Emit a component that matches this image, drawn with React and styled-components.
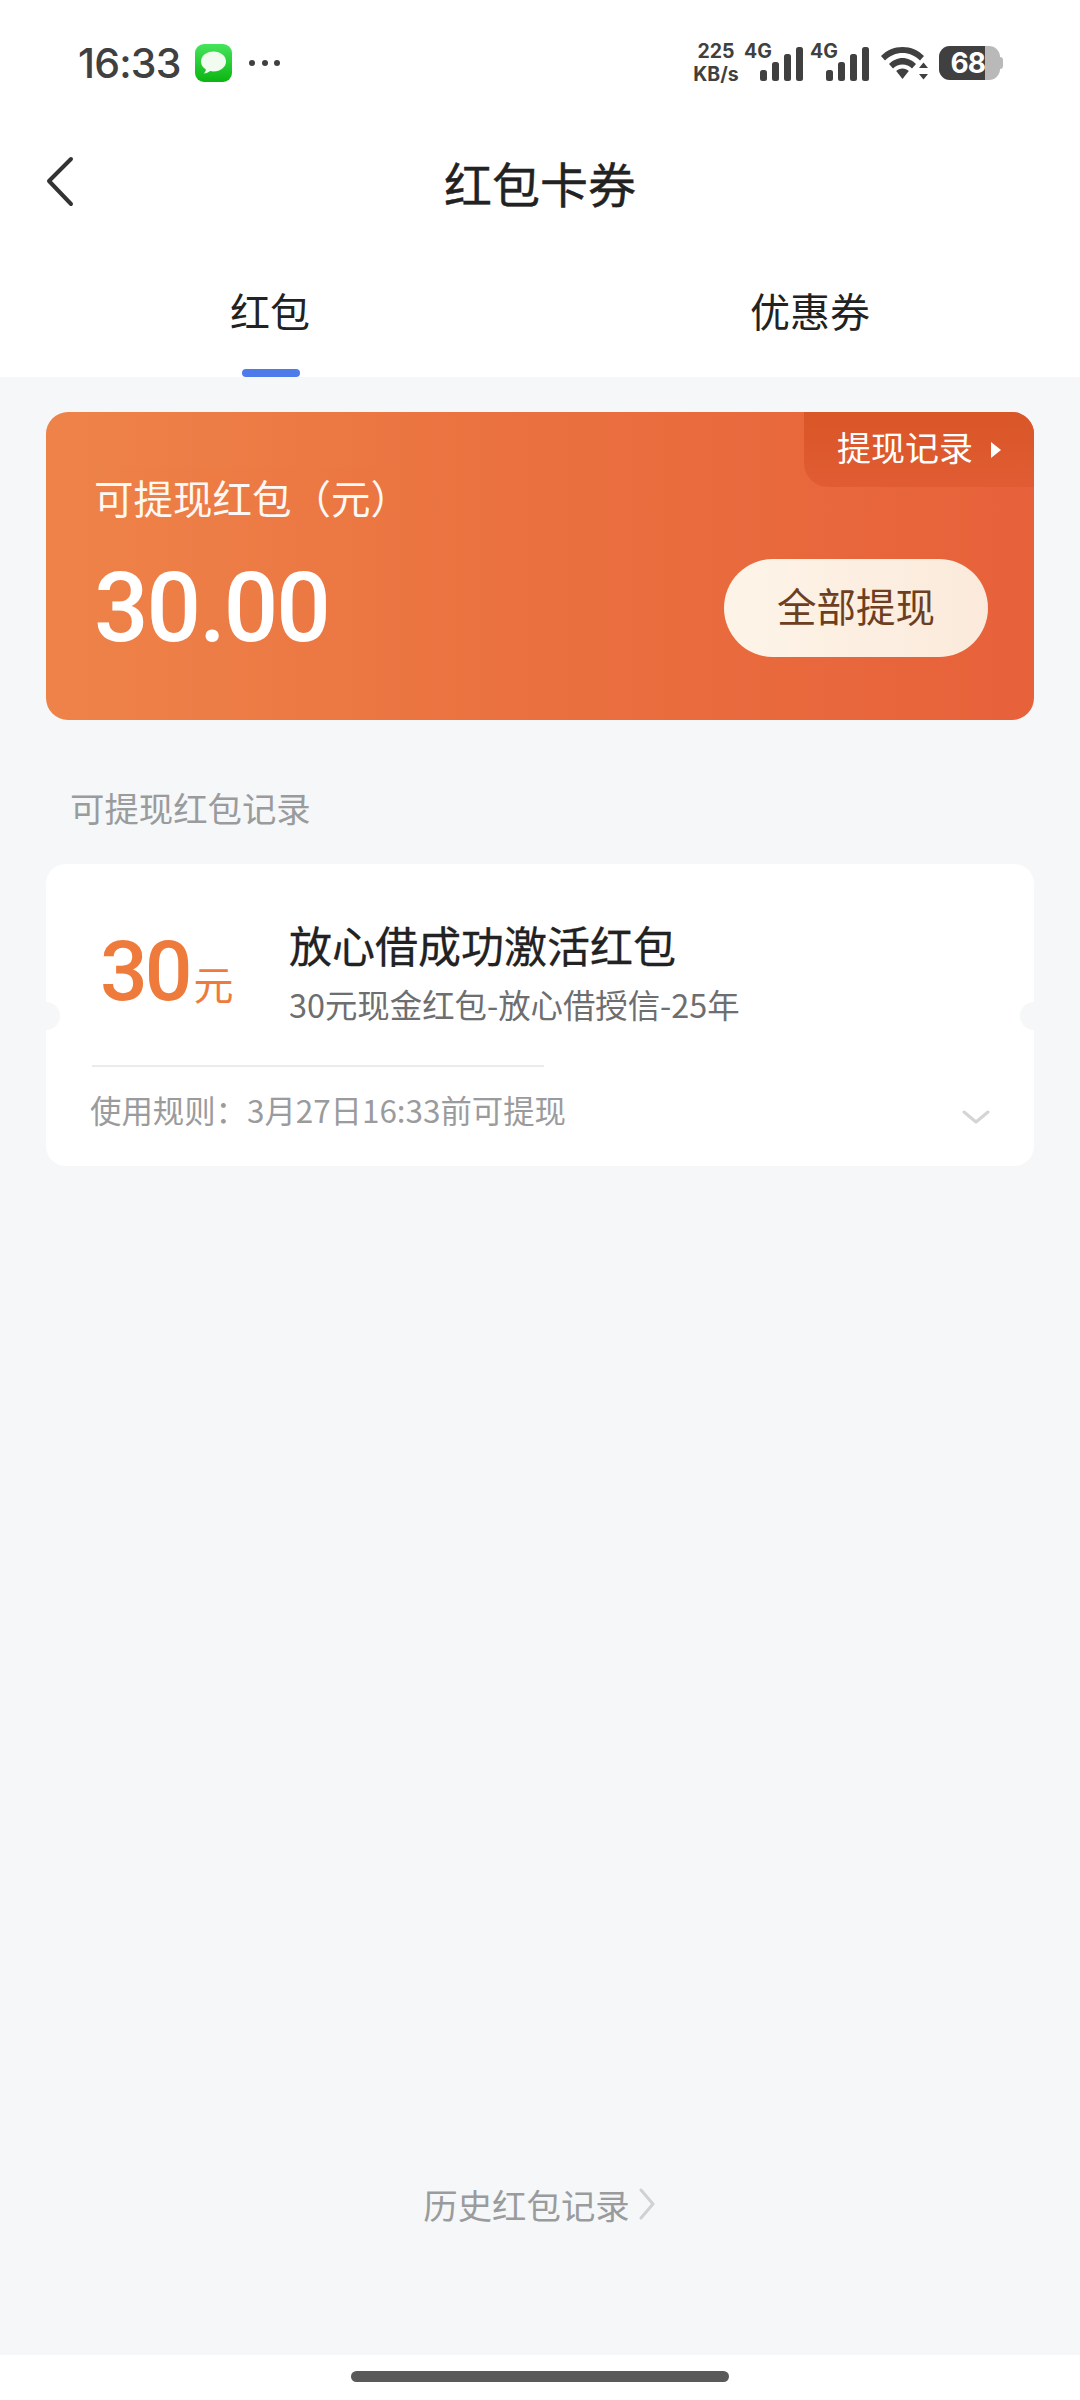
import React from "react";
import styled, { createGlobalStyle } from "styled-components";

const Global = createGlobalStyle`
  html, body { margin: 0; padding: 0; background: #fff; }
  * { box-sizing: border-box; }
  body { font-family: Roboto, "Noto Sans CJK SC", sans-serif; }
`;
const Page = styled.div`
  width: 1080px; height: 2400px; display: flex; flex-direction: column; background: #fff; overflow: hidden;
`;
const StatusBar = styled.div`
  height: 126px; display: flex; align-items: center; justify-content: space-between; padding: 0 80px 0 78px; color: #404040;
`;
const StatusLeft = styled.div`display: flex; align-items: center;`;
const Time = styled.span`
  font: 500 41px/48px Inter, Roboto, sans-serif; letter-spacing: -0.8px; width: 117px;
`;
const Dots = styled.div`
  display: flex; gap: 6.5px; margin-left: 17px;
  i { width: 6px; height: 6px; border-radius: 50%; background: #404040; display: block; }
`;
const StatusRight = styled.div`display: flex; align-items: center;`;
const Speed = styled.div`
  display: flex; flex-direction: column; align-items: center; width: 46px; margin-right: 5px;
  font: 700 19.5px/23px Inter, Roboto, sans-serif; color: #404040; white-space: nowrap;
`;
const Signal = styled.div`
  position: relative; width: 59px; height: 36px; display: flex; align-items: flex-end; justify-content: flex-end; gap: 5px; margin-left: ${p => p.$ml || 0}px;
  b { display: block; width: 7px; background: #404040; border-radius: 2.5px; }
`;
const NetLabel = styled.span`
  position: absolute; left: 0; top: -4px; font: 700 19.5px/20px Inter, Roboto, sans-serif; color: #404040;
`;
const Battery = styled.div`
  width: 61px; height: 34px; position: relative; margin-left: 10px; border-radius: 11px; background: #b9b9b9; display: flex;
`;
const BatteryFill = styled.div`
  width: 46px; height: 34px; background: #404040; border-radius: 11px 0 0 11px; color: #fff;
  font: 700 28px/34px Inter, Roboto, sans-serif; display: flex; justify-content: flex-end; letter-spacing: -1px;
`;
const BatteryNub = styled.div`
  position: absolute; right: -3px; top: 11px; width: 3px; height: 12px; background: #b9b9b9; border-radius: 0 3px 3px 0;
`;

const Nav = styled.div`
  height: 120px; position: relative; display: flex; align-items: center; justify-content: center; padding-bottom: 8px;
`;
const Back = styled.svg`position: absolute; left: 43px; top: 28px;`;
const Title = styled.h1`
  margin: 0; font: 400 48px/60px "Noto Sans CJK SC", sans-serif; color: #222; -webkit-text-stroke: 0.4px #222;
`;
const Tabs = styled.div`
  height: 131px; display: grid; grid-template-columns: 1fr 1fr;
`;
const Tab = styled.div`
  position: relative; display: flex; align-items: center; justify-content: center; padding-bottom: 3px;
  font: 400 40px/50px "Noto Sans CJK SC", sans-serif; color: #222;
`;
const Indicator = styled.span`
  position: absolute; bottom: 0; left: 50%; width: 58px; margin-left: -28px; height: 8px; border-radius: 4px; background: #4d7bea;
`;
const Main = styled.main`
  flex: 1; background: #f5f7f8; padding: 35px 46px 0; display: flex; flex-direction: column;
`;
const BalanceCard = styled.section`
  position: relative; height: 308px; border-radius: 22px; padding: 60px 46px 0 48px; overflow: hidden; color: #fff;
  background: linear-gradient(90deg, #ee8349 0%, #ea703f 50%, #e7613a 100%);
`;
const RecordTab = styled.div`
  position: absolute; top: 0; right: 0; width: 230px; height: 75px; border-radius: 0 0 0 24px; padding: 0 0 5px 33px;
  background: linear-gradient(180deg, #d95627, #e15c33); display: flex; align-items: center; font: 400 34px/44px "Noto Sans CJK SC", sans-serif; color: #fff;
`;
const TriRight = styled.i`
  display: block; width: 0; height: 0; margin: 5px 0 0 18px; border-left: 10px solid #fff; border-top: 8px solid transparent; border-bottom: 8px solid transparent;
`;
const BalanceLabel = styled.div`font: 400 39.5px/50px "Noto Sans CJK SC", sans-serif; color: #fff; opacity: .95;`;
const BalanceRow = styled.div`
  display: flex; align-items: center; justify-content: space-between; margin-top: 37px; height: 98px;
`;
const BalanceValue = styled.div`font: 500 96px/98px Roboto, sans-serif; letter-spacing: -2px; color: #fff;`;
const WithdrawBtn = styled.button`
  width: 264px; height: 98px; border: 0; border-radius: 49px; background: linear-gradient(90deg, #fdf4e8, #fbeadb);
  color: #6e3f1f; font: 400 39.5px/50px "Noto Sans CJK SC", sans-serif; padding: 0 0 6px;
`;
const SectionLabel = styled.div`
  font: 400 34.4px/44px "Noto Sans CJK SC", sans-serif; color: #9a9b9d; margin: 65px 0 35px 24px;
`;
const ItemCard = styled.section`
  position: relative; height: 302px; background: #fff; border-radius: 20px; padding-top: 50px;
`;
const Notch = styled.span`
  position: absolute; top: 138px; width: 28px; height: 28px; border-radius: 50%; background: #f5f7f8;
  ${p => p.$side}: -14px;
`;
const ItemTop = styled.div`display: flex; padding-left: 54px;`;
const Amount = styled.div`
  width: 189px; display: flex; align-items: baseline; color: #ee7b3c; padding-top: 14px; height: 100px;
`;
const AmountNum = styled.span`font: 500 84px/88px Roboto, sans-serif; letter-spacing: -3px;`;
const AmountUnit = styled.span`font: 400 40px/44px "Noto Sans CJK SC", sans-serif; margin-left: 4px;`;
const ItemText = styled.div`display: flex; flex-direction: column;`;
const ItemTitle = styled.div`font: 400 43px/60px "Noto Sans CJK SC", sans-serif; color: #222; -webkit-text-stroke: 0.3px #222;`;
const ItemSub = styled.div`font: 400 32.4px/44px "Noto Sans CJK SC", sans-serif; color: #6d6e70; margin-top: 8px;`;
const Divider = styled.div`height: 2px; width: 452px; margin: 39px 0 0 46px; background: #ebebed;`;
const RuleRow = styled.div`
  display: flex; align-items: center; justify-content: space-between; padding: 0 44px; margin-top: 21px; height: 44px;
`;
const RuleText = styled.div`font: 400 31.4px/44px "Noto Sans CJK SC", sans-serif; color: #9a9b9d;`;
const RuleChevron = styled.svg`margin-top: 14px;`;
const HistoryLink = styled.div`
  margin-top: auto; margin-bottom: 129px; display: flex; align-items: center; justify-content: center; gap: 9px; padding-right: 2px;
  font: 400 34.4px/44px "Noto Sans CJK SC", sans-serif; color: #9a9b9d;
`;
const HomeArea = styled.footer`
  height: 45px; background: #fff; display: flex; justify-content: center; padding-top: 16px;
`;
const HomeBar = styled.div`width: 378px; height: 11px; border-radius: 6px; background: #595959;`;

const MessageIcon = () => (
  <svg width="37" height="38" viewBox="0 0 37 38">
    <defs>
      <linearGradient id="g" x1="0" y1="0" x2="0" y2="1">
        <stop offset="0" stopColor="#45e55c" />
        <stop offset="1" stopColor="#0bb511" />
      </linearGradient>
    </defs>
    <rect width="37" height="38" rx="9" fill="url(#g)" />
    <path d="M18.500 7.500c-7 0-12.500 4.300-12.500 10 0 3.400 2 6.300 5 8.100-.3 1.500-1.200 3-2.300 4 2.500-.2 4.700-1.200 6.300-2.500 1.100.2 2.300.4 3.500.4 7 0 12.500-4.400 12.500-10s-5.500-10-12.500-10z" fill="#f2fbef" />
  </svg>
);
const Bars = () => (
  <>
    {[11, 19, 27, 34].map(h => <b key={h} style={{ height: h }} />)}
  </>
);
const Wifi = () => (
  <svg width="48" height="34" viewBox="0 0 48 34" style={{ marginLeft: 12 }} fill="#404040">
    <path d="M0 10C6 4 13 1 21.500 1S37 4 43 10L39 14.500C34 9.500 28 7 21.500 7S9 9.500 4 14.500z" />
    <path d="M8 18C11.500 14.500 16.500 12 21.500 12S31.500 14.500 35 18L31 22.500C28.500 20 25 18.500 21.500 18.500S14.500 20 12 22.500z" />
    <path d="M21.500 22.500c2.500 0 4.700 1 6.300 2.500L21.500 33l-6.300-8c1.600-1.500 3.800-2.500 6.300-2.500z" />
    <path d="M42.500 16.500l4.500 5.500h-9zM42.500 33.500l-4.500-5.500h9z" />
  </svg>
);

export default function App() {
  return (
    <Page>
      <Global />
      <StatusBar>
        <StatusLeft>
          <Time>16:33</Time>
          <MessageIcon />
          <Dots><i /><i /><i /></Dots>
        </StatusLeft>
        <StatusRight>
          <Speed><span>225</span><span>KB/s</span></Speed>
          <Signal><NetLabel>4G</NetLabel><Bars /></Signal>
          <Signal $ml={7}><NetLabel>4G</NetLabel><Bars /></Signal>
          <Wifi />
          <Battery>
            <BatteryFill>68</BatteryFill>
            <BatteryNub />
          </Battery>
        </StatusRight>
      </StatusBar>
      <Nav>
        <Back width="34" height="56" viewBox="0 0 34 56" fill="none" stroke="#333" strokeWidth="4" strokeLinecap="round" strokeLinejoin="round">
          <path d="M28 5 L6 27 L28 50" />
        </Back>
        <Title>红包卡券</Title>
      </Nav>
      <Tabs>
        <Tab>红包<Indicator /></Tab>
        <Tab>优惠券</Tab>
      </Tabs>
      <Main>
        <BalanceCard>
          <RecordTab>提现记录<TriRight /></RecordTab>
          <BalanceLabel>可提现红包（元）</BalanceLabel>
          <BalanceRow>
            <BalanceValue>30.00</BalanceValue>
            <WithdrawBtn>全部提现</WithdrawBtn>
          </BalanceRow>
        </BalanceCard>
        <SectionLabel>可提现红包记录</SectionLabel>
        <ItemCard>
          <Notch $side="left" />
          <Notch $side="right" />
          <ItemTop>
            <Amount><AmountNum>30</AmountNum><AmountUnit>元</AmountUnit></Amount>
            <ItemText>
              <ItemTitle>放心借成功激活红包</ItemTitle>
              <ItemSub>30元现金红包-放心借授信-25年</ItemSub>
            </ItemText>
          </ItemTop>
          <Divider />
          <RuleRow>
            <RuleText>使用规则：3月27日16:33前可提现</RuleText>
            <RuleChevron width="28" height="16" viewBox="0 0 28 16" fill="none" stroke="#d4d4d6" strokeWidth="3" strokeLinecap="round" strokeLinejoin="round">
              <path d="M2 3 L14 13 L26 3" />
            </RuleChevron>
          </RuleRow>
        </ItemCard>
        <HistoryLink>
          历史红包记录
          <svg width="16" height="32" viewBox="0 0 16 32" fill="none" stroke="#d0d1d3" strokeWidth="3" strokeLinecap="round" strokeLinejoin="round">
            <path d="M2 2 L14 16 L2 30" />
          </svg>
        </HistoryLink>
      </Main>
      <HomeArea><HomeBar /></HomeArea>
    </Page>
  );
}
